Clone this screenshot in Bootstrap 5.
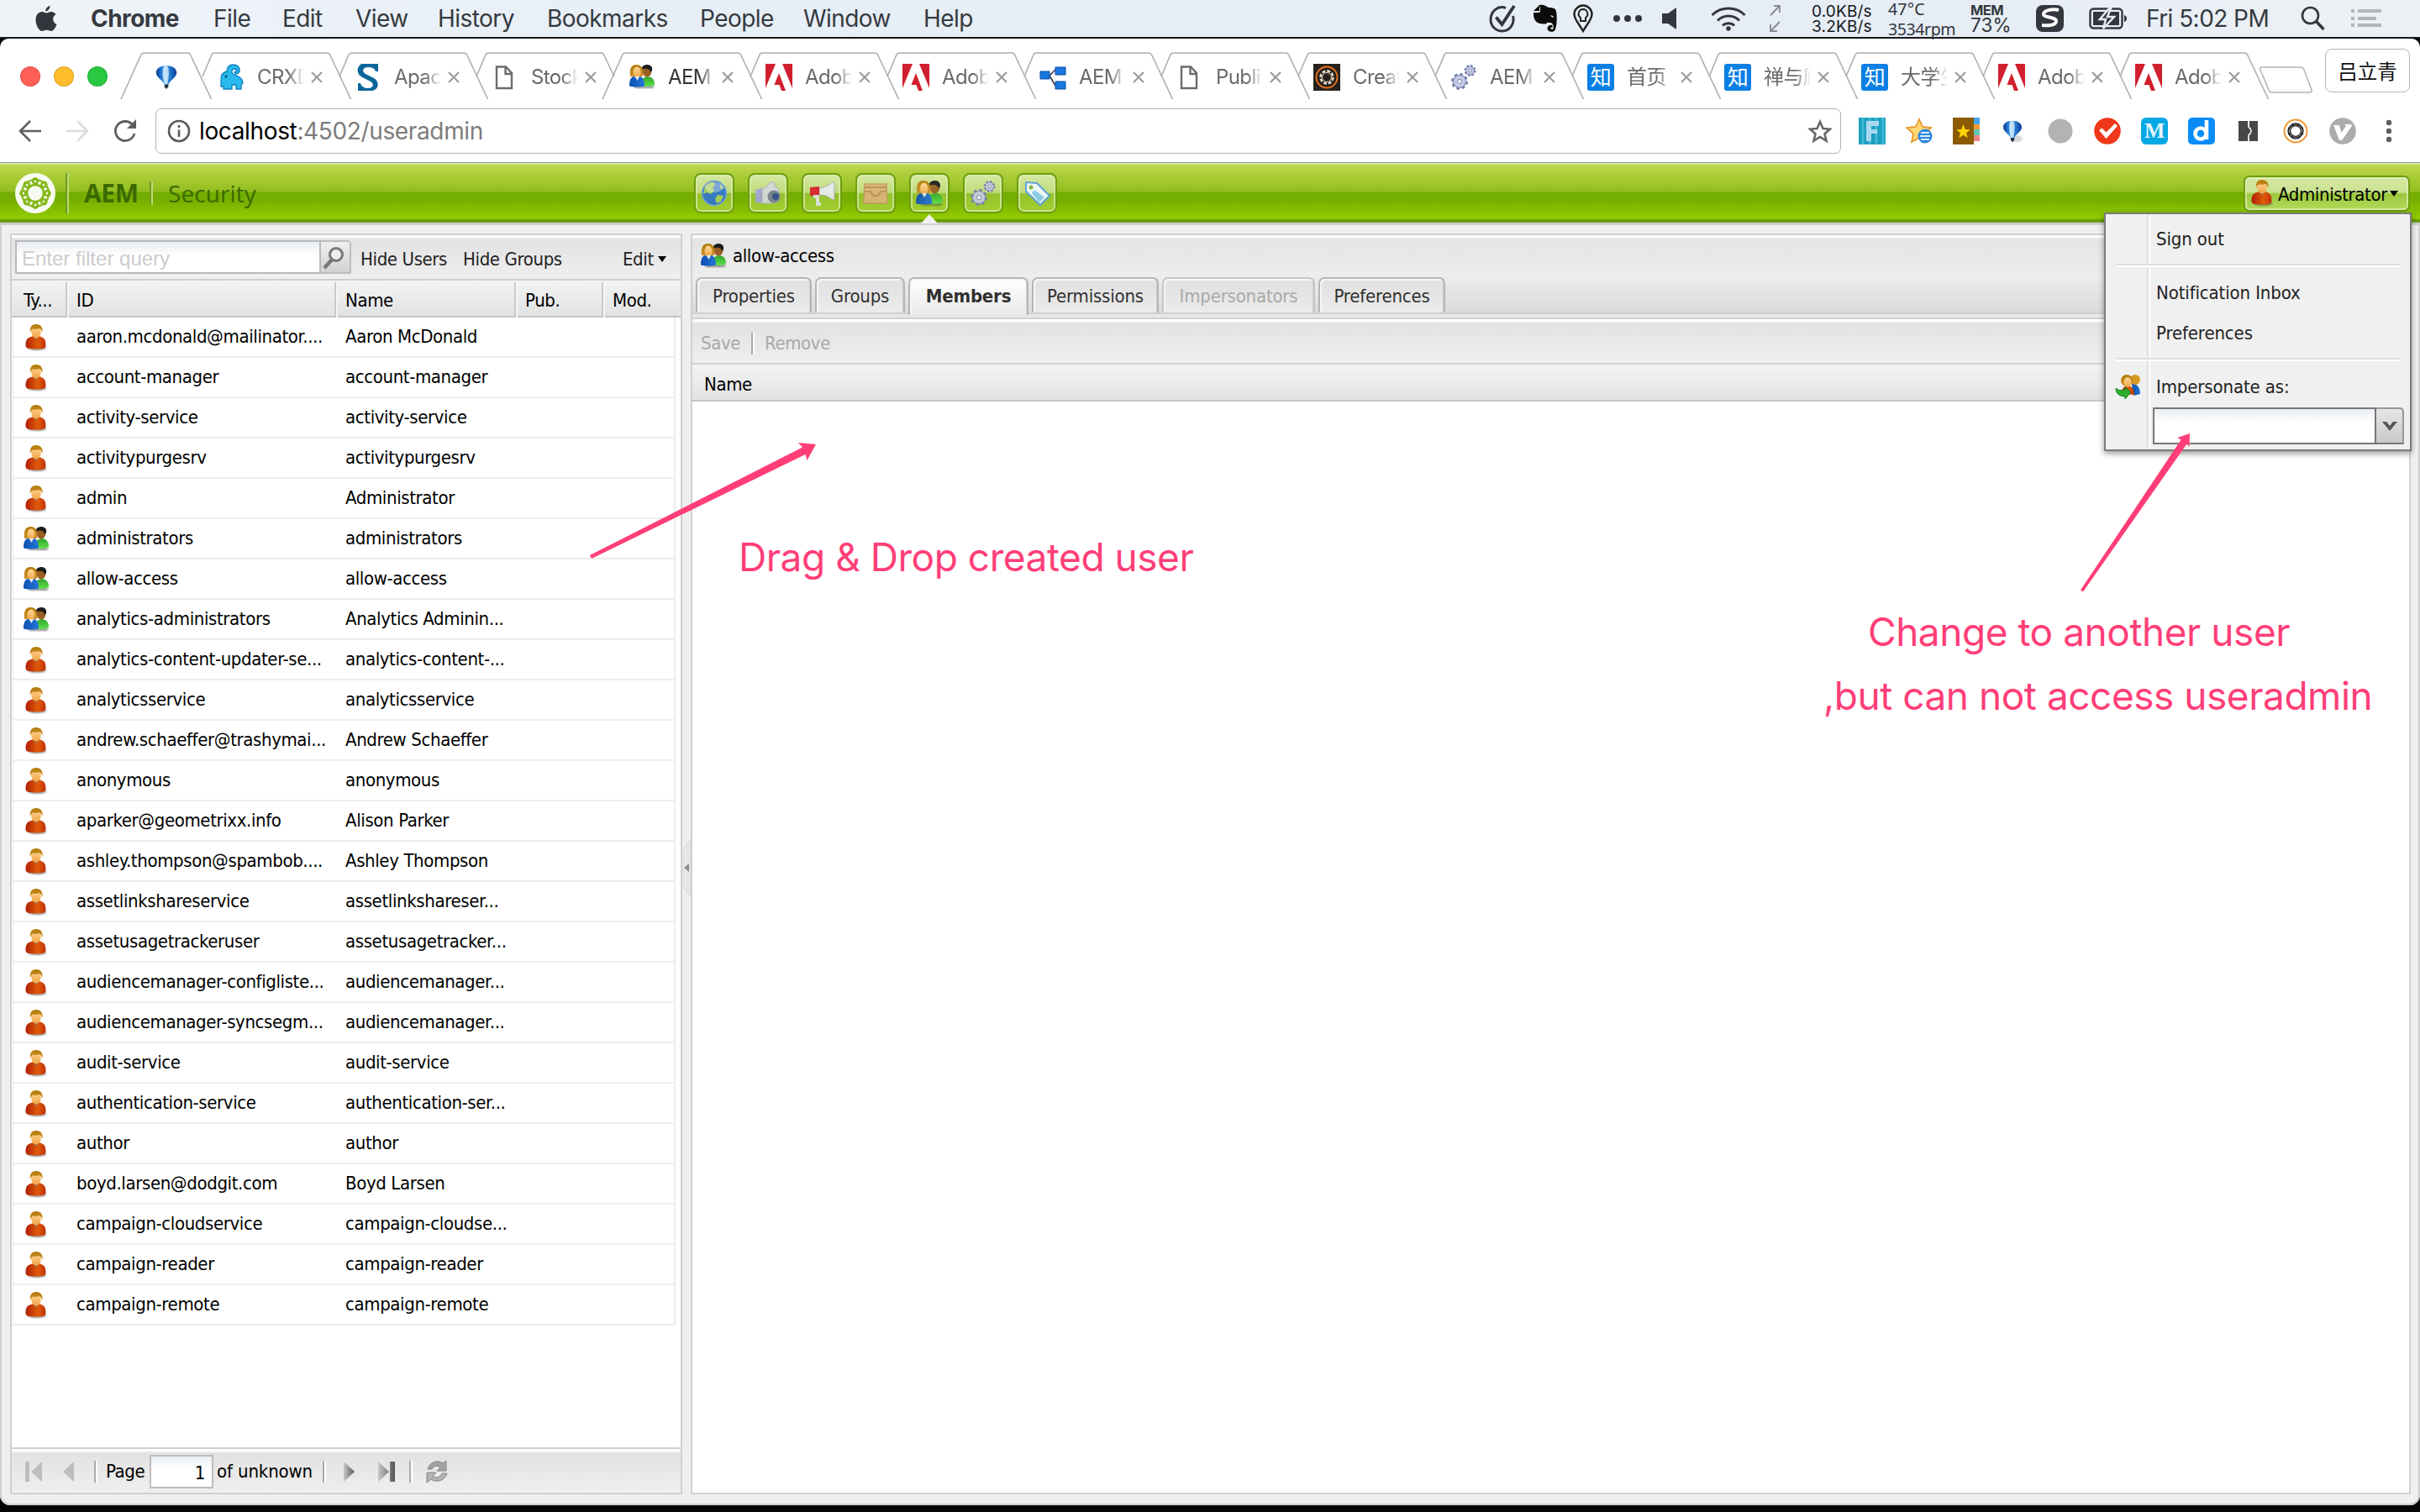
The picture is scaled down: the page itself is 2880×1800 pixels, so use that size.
<!DOCTYPE html>
<html lang="en">
<head>
<meta charset="utf-8">
<title>AEM Security</title>
<link href="https://cdn.jsdelivr.net/npm/bootstrap@5.3.0/dist/css/bootstrap.min.css" rel="stylesheet">
<style>
:root{--ui:"DejaVu Sans Condensed","DejaVu Sans",sans-serif;--mac:Inter,"Noto Sans CJK SC",sans-serif;--line:#d0d0d0}
body{width:2880px;height:1800px;overflow:hidden;background:#060606;font:22px/1 var(--ui);letter-spacing:-.38px;color:#000}
svg{display:block;flex:none}
/* system menu bar */
.menubar{display:grid;height:46px;grid-template-columns:67px 146px 82px 87px 98px 130px 182px 123px 143px 672px 52px 48px 48px 58px 58px 70px 51px 91px 98px 77px 63px 69px 183px 60px 1fr;padding-left:42px;background:linear-gradient(90deg,#eff4f8,#e6eef6 30%,#e6edf5 80%,#edf1f5);border-bottom:2px solid #14171e;font:28px/44px var(--mac);letter-spacing:-.55px;color:#353940;white-space:nowrap}
.menubar>span{margin-left:-1px}
.menubar>svg{align-self:center}
.twin svg{overflow:visible}
/* browser window */
.win{height:1746px;border-radius:10px 10px 12px 12px;overflow:hidden;background:#fff}
.strip{height:73px;font:24px/1 var(--mac);color:#6a6a6a;letter-spacing:-.6px}
.lights{width:157px;padding:33px 0 0 24px;gap:16px}
.lights i{width:24px;height:24px;border-radius:50%;box-shadow:inset 0 0 0 1px #0002}
.lights i:nth-child(1){background:#ff5f57}
.lights i:nth-child(2){background:#ffbd2e}
.lights i:nth-child(3){background:#28c940}
.ctab{position:relative;width:163px;height:73px;flex:none}
.ctab.pin{width:84px}
.ctab>.edge{position:absolute;left:0;top:17px;overflow:visible;fill:none;stroke:#adadad;stroke-width:1.6}
.ctab>.body{display:flex;align-items:center;padding-left:18px;height:92px}
.ctab.pin>.body{padding-left:26px}
.cap{width:56px;margin-left:15px;overflow:hidden;white-space:nowrap;line-height:34px;-webkit-mask:linear-gradient(90deg,#000 66%,#0000 100%);mask:linear-gradient(90deg,#000 66%,#0000 100%)}
.ctab.on .cap{color:#333}
.close{margin-left:7px}
.newtab{margin:33px 0 0 2px}
.profile{width:101px;height:52px;margin:12px 0 0 13px;border:1.5px solid #b3b3b3;border-radius:8px;font:23.5px/50px "Noto Sans CJK SC",sans-serif;text-align:center;color:#111;letter-spacing:0}
.nav-row{height:75px;padding:0 0 0 22px;border-bottom:1.5px solid #9b9b9b}
.nav-row .fwd{margin:0 28px}
.omni{width:2006px;height:54px;margin-left:21px;padding:0 9px 0 13px;border:1.5px solid #b3b3b3;border-radius:7px;font:28px/1 var(--mac);letter-spacing:-.36px}
.omni .url{margin-left:10px;color:#7c7c7c}
.ext{gap:24px;margin-left:21px}
/* application header */
.apphead{height:72px;background:linear-gradient(#d3e79b 0,#d3e79b 1px,#bed64d 3px,#a6ca33 18px,#93be1f 34px,#72ac00 35px,#75af00 44px,#93cb00 66px,#679b00 68px,#5d9000 70px,#b5c4a0 71px,#cfcfcf 72px);font-family:"Open Sans","Noto Sans",sans-serif;color:#3c6a00}
.applogo{margin-left:18px;margin-right:12px}
.vsep{width:2px;height:48px;background:#6f9f1c;box-shadow:2px 0 #bcd877}
.vsep.sm{height:28px}
.brand{font-size:30px;margin-left:20px;width:78px}
.area{font-size:28px;margin-left:20px;width:626px;letter-spacing:.1px}
.tool{width:48px;height:48px;border-radius:8px;border:2px solid #6f9d12;box-shadow:inset 0 0 0 2px #dcefaeb0;background:linear-gradient(#d6e8a2,#c0dc7c 48%,#93c02c 52%,#a3d02f);display:flex;align-items:center;justify-content:center}
.tool svg{opacity:.92}
.tools{gap:16px}
.sel{position:relative}
.sel:after{content:"";position:absolute;left:12px;top:47px;border:10px solid transparent;border-top:0;border-bottom:11px solid #f2f2f2}
.account{margin-right:12px}
.admin{width:198px;height:43px;border:2px solid #6f9d12;border-radius:7px;box-shadow:inset 0 0 0 2px #e3f2bdb0;background:linear-gradient(#d6e8a2,#cbe292 45%,#9cc83c 52%,#b2d95c);color:#000;font-family:var(--ui);padding-left:6px}
.admin>span:first-of-type{margin:4px 3px 0 3px}
.usermenu{position:absolute;top:44px;right:-2px;width:366px;height:284px;background:linear-gradient(90deg,#f0f0f0 49px,#dedede 49px,#dedede 51px,#fff 51px,#fff 53px,#f0f0f0 53px);border:2px solid #7b7b7b;box-shadow:0 3px 7px #0006;z-index:5;color:#222;font:22px/48px var(--ui);letter-spacing:-.13px;padding:6px 0 0 60px}
.usermenu hr{margin:5px 12px 7px -48px;border:0;height:4px;opacity:1;background:linear-gradient(#dedede 50%,#fff 50%)}
.usermenu .who{margin-left:-49px;margin-right:17px}
.combo{width:299px;height:44px;margin-left:-4px;margin-top:0}
.combo b{width:267px;border:2px solid #777;background:linear-gradient(#e9edf1,#fff 40%)}
.combo i{width:33px;border:2px solid #999;border-left:0;border-bottom-color:#777;border-radius:0 5px 0 0;background:linear-gradient(#e6e6e6,#c9c9c9)}
/* panels */
.appbody{height:1526px;border:2px solid #cfcfcf;border-radius:0 0 12px 12px;background:#efefef;padding:10px 9px 11px 10px}
.pane{border:2px solid var(--line);background:#fff}
.pane.side{width:800px}
.bar{height:52px;background:linear-gradient(#fff 0,#fff 2px,#e2e2e2 5px,#e6e6e6 20px,#efefef 100%);color:#222;white-space:nowrap}
.bar.up{padding-top:5px}
.bar.mute{color:#a9a9a9;padding-left:10px}
.find{width:364px;height:40px;margin-left:4px;margin-top:-5px;padding-left:6px;border:2px solid #b9b9b9;background:linear-gradient(#e9edf1,#fff 45%);font:24px/40px "Liberation Sans",sans-serif;color:#ccc;letter-spacing:0}
.go{width:36px;height:40px;margin-top:-5px;margin-right:11px;border:2px solid #bdbdbd;border-left:0;border-radius:0 5px 0 0;background:linear-gradient(#f0f0f0,#d2d2d2)}
.hide1{width:122px}.hide2{width:190px}
.caret{border:5.5px solid transparent;border-bottom:0;border-top:7px solid #000}
.bar .caret{margin-left:5px}
.gridhead,.gridrow{display:grid;grid-template-columns:66px 320px 214px 104px 1fr;white-space:nowrap}
.gridhead{height:46px;border-top:2px solid var(--line);border-bottom:2px solid #c6c6c6;background:linear-gradient(#f2f4f4,#e2e2e2)}
.gridhead>span{padding:2px 0 0 11px;line-height:40px;border-right:2px solid #cacaca;box-shadow:2px 0 #f6f6f6;margin-top:2px}
.gridhead>span:first-child{padding-left:14px}
.gridhead>span:last-child{border:0;box-shadow:none}
.gridrow{height:48px;width:789px;margin-left:1px;border:solid #ededed;border-width:0 2px 2px 1px;line-height:45px}
.gridrow>span{padding-left:9px}
.gridrow>span:first-child{padding:8px 0 0 11px}
.foot{border-top:2px solid var(--line)}
.pager{padding-top:1px;color:#000}
.pager .first{margin-left:15px;margin-right:-1px}
.pager .pg{margin-left:12px;width:52px}
.pager .of{margin-left:4px;width:126px;letter-spacing:-.13px}
.pager .next{margin-left:22px}
.pager .ref{margin-left:16px}
.psep{width:2px;height:26px;background:#aaa;box-shadow:2px 0 #fff}
.pageno{width:76px;height:40px;border:2px solid #bdbdbd;background:linear-gradient(#e9edf1,#fff 40%);line-height:40px;text-align:right;padding-right:8px}
.split{width:10px}
.ptitle{height:50px;padding-left:9px;line-height:48px}
.ptitle span{margin-left:7px}
.phead{height:92px;background:linear-gradient(#fff 0,#fff 2px,#e4e4e4 5px,#ededed 48px,#dadada 92px)}
.ptabs{gap:4px;padding-left:4px;height:42px}
.ptab{height:42px;line-height:41px;text-align:center;border:2px solid #b6b6b6;border-bottom:0;border-radius:7px 7px 0 0;background:linear-gradient(#e0e0e0,#ebebeb);box-shadow:inset 2px 2px #f6f6f6,inset -1px 0 #cfcfcf;color:#303030;letter-spacing:-.2px}
.ptab.on{height:45px;background:linear-gradient(#fff,#e9e9e9);font-weight:700}
.ptab.off{color:#a9a9a9;border-color:#c6c6c6}
.spacer{height:8px;background:#e8e8e8;border:solid var(--line);border-width:2px 0}
.save{width:60px}.mute .psep{margin-right:14px}
.note{position:absolute;font:46px/76px var(--mac);letter-spacing:-.47px;color:#ff3e78;white-space:nowrap}
.n1{left:879px;top:625px}.n2{left:2223px;top:714px}.n3{left:2170px;top:790px}
.marks{position:absolute;left:0;top:0;pointer-events:none;z-index:9}
.w1{width:138px}.w2{width:107px}.w3{width:143px}.w4{width:151px}.w5{width:182px}.w6{width:151px}
</style>
<script src="https://cdn.jsdelivr.net/npm/bootstrap@5.3.0/dist/js/bootstrap.bundle.min.js"></script>
</head>
<body>
<svg width="0" height="0" class="position-absolute">
<defs>
<linearGradient id="gRed" x1="0" x2="1"><stop offset="0" stop-color="#b01e04"/><stop offset=".6" stop-color="#e05c0a"/><stop offset="1" stop-color="#bf3008"/></linearGradient>
<linearGradient id="gHair" x2="0" y2="1"><stop stop-color="#b07a08"/><stop offset="1" stop-color="#d0902a"/></linearGradient>
<linearGradient id="gSkin" x2="0" y2="1"><stop stop-color="#ffd79a"/><stop offset="1" stop-color="#f0a545"/></linearGradient>
<linearGradient id="gBlue"><stop stop-color="#0c4fb0"/><stop offset="1" stop-color="#2476d8"/></linearGradient>
<linearGradient id="gGreen" x2="0" y2="1"><stop stop-color="#2fa52a"/><stop offset="1" stop-color="#5fe04f"/></linearGradient>
<linearGradient id="gBal"><stop stop-color="#063a94"/><stop offset=".3" stop-color="#2a84dd"/><stop offset=".45" stop-color="#b5dffa"/><stop offset=".6" stop-color="#2f86dc"/><stop offset="1" stop-color="#063a94"/></linearGradient>
<linearGradient id="gGray"><stop stop-color="#c9c9c9"/><stop offset="1" stop-color="#555"/></linearGradient>
<filter id="soft" x="-20%" y="-20%" width="140%" height="140%"><feGaussianBlur stdDeviation="1.1"/></filter>
<symbol id="user" viewBox="0 0 32 32"><ellipse cx="17" cy="28" rx="11" ry="3" fill="#444" opacity=".6" filter="url(#soft)"/><path d="M3.500 25c0-6 2-8.500 5-9.500l4-1.500 3.500 3 4-3 3 1.500c3 1 4.500 4 4.500 9.500 0 4-4 4.500-12 4.500S3.500 29 3.500 25z" fill="url(#gRed)"/><path d="M12 13.500h8l-4 5z" fill="#83808a"/><ellipse cx="16" cy="9" rx="5.800" ry="7.500" fill="url(#gSkin)"/><path d="M9 10C8 4 10.500 0 16 0s8.500 4 7.500 10c-1-3-2.500-4.500-4-5-2 1-5 1-7 .5-2 1-3 2.500-3.500 4.500z" fill="url(#gHair)"/></symbol>
<symbol id="group" viewBox="0 0 32 32"><path d="M6 26h25l-2 3H8z" fill="#444" opacity=".6" filter="url(#soft)"/><path d="M15 26c0-7 2-10 7-11 6 0 9 4 9 9 0 3-8 4-16 2z" fill="url(#gGreen)"/><ellipse cx="22" cy="9" rx="5.500" ry="6.500" fill="#9a5f22"/><path d="M15.500 7c0-4 3-6 7-6s6.500 3 5.500 7l-2 2c0-4-5-5-8-4z" fill="#1c1c1c"/><path d="M2 15C1 6 3 1 9.500 1S18 6 17 15z" fill="url(#gHair)"/><ellipse cx="10" cy="10" rx="4.500" ry="6.500" fill="url(#gSkin)"/><path d="M1 26c0-7 2-11 6-11l3 3 3-3c4 0 6 5 6 11 0 2-18 2-18 0z" fill="url(#gBlue)"/><path d="M8 15h5l-2.500 5z" fill="#eee"/></symbol>
<symbol id="imp" viewBox="0 0 32 32"><path d="M20 12c7 0 10 5 10 12l-8 2z" fill="url(#gBlue)"/><path d="M8 24c0-6 2-9 7-10 6 1 8 5 8 11z" fill="url(#gRed)"/><circle cx="24" cy="7" r="6" fill="#d89a25"/><circle cx="14" cy="8" r="7" fill="url(#gHair)"/><ellipse cx="15" cy="10" rx="4.500" ry="6" fill="url(#gSkin)"/><path d="M1 17c3 3 6 3 11 2v-3l7 6-7 8v-3C6 27 1 24 1 17z" fill="#2eae2a" stroke="#14801a"/></symbol>
<symbol id="gear" viewBox="0 0 32 32"><g fill="#c5cbe6" stroke="#7680ae"><circle cx="11" cy="21" r="8" stroke-width="4" stroke-dasharray="3.300 3"/><circle cx="11" cy="21" r="7.500"/><circle cx="11" cy="21" r="2.500" fill="#fff"/><circle cx="23.500" cy="8" r="5.500" stroke-width="3" stroke-dasharray="2.300 2"/><circle cx="23.500" cy="8" r="5"/><circle cx="23.500" cy="8" r="1.800" fill="#fff"/></g></symbol>
<symbol id="balloon" viewBox="0 0 28 32"><path d="M14 1c8 0 13 4 13 9 0 6-8 9-11 16h-4C9 19 1 16 1 10c0-5 5-9 13-9z" fill="url(#gBal)"/><path d="M11 2h5c2 6 1 15-1 23h-2C9 17 8 8 11 2z" fill="#cfe9fb" opacity=".8"/><path d="M11.500 25h5v3l-2.500 3-2.500-3z" fill="#253447"/></symbol>
<symbol id="adobe" viewBox="0 0 32 32"><path fill="#d01f2e" d="M0 0h12L0 29zM20 0h12v29zM16 11l8 21h-5l-2.500-7h-6z"/></symbol>
<symbol id="doc" viewBox="0 0 32 32"><path d="M6 3.500h11l7 7.500v18H6zM16.500 4v8H24" fill="none" stroke="#6b6b6b" stroke-width="2.400"/></symbol>
<symbol id="crx" viewBox="0 0 32 32"><path d="M4 27v-9c0-5 3-8 7-9C11 4 14 1 19 1c5 0 8 4 7 8-1 3-5 4-6 1 3 0 3-4 0-4-3 0-4 3-2 6l5 2c4 2 7 5 7 9l-2 2v5h-6v-5h-5v5H7v-3z" fill="#29b9ec" stroke="#0c80bd" stroke-width="1.300"/><circle cx="10" cy="15" r="1.500" fill="#06456b"/></symbol>
<symbol id="sling" viewBox="0 0 32 32"><path d="M4 0h24v9h-3C24 5 20 4 16 4c-6 0-8 5-3 8l10 5c8 5 5 15-3 15H4v-9h3c1 4 5 6 9 6 6 0 8-5 3-8L9 16C2 12 2 4 8 0z" fill="#0a6699"/></symbol>
<symbol id="flow" viewBox="0 0 32 32"><path d="M12 14l7-7M12 14l7 12" stroke="#334" stroke-width="1.500"/><g fill="#1877e0" stroke="#0c4da3"><path d="M1 9h11v9H1zM19 4h12v9H19zM19 21h12v9H19z"/></g></symbol>
<symbol id="create" viewBox="0 0 32 32"><path fill="#26211c" d="M0 0h32v32H0z"/><circle cx="16" cy="16" r="12.500" fill="none" stroke="#f0741c" stroke-width="1.800"/><g fill="none" stroke="#eadccb" stroke-width="1.600"><circle cx="16" cy="16" r="7.500" stroke-width="2.500" stroke-dasharray="4 1.890"/><circle cx="16" cy="16" r="5.500" stroke-width="1"/></g></symbol>
<symbol id="zhi" viewBox="0 0 32 32"><rect width="32" height="32" rx="3" fill="#0b7fe4"/><text x="16" y="25" text-anchor="middle" font-family="Noto Sans CJK SC" font-size="25" fill="#fff">知</text></symbol>
<symbol id="x" viewBox="0 0 16 16"><path d="M2 2l12 12M14 2L2 14" stroke="#999" stroke-width="2"/></symbol>
</defs>
</svg>

<nav class="menubar">
<svg width="26" height="32" viewBox="0 0 26 32"><path fill="#33373d" d="M17.500 1c.3 3-2.500 6.500-5.300 6.300C12 4.500 14.500 1.500 17.500 1zM13 9.500c2 0 3-1.500 6-1.500 2.500 0 4.500 1.500 5.500 3-5 3-4 10 1 12-1.500 4-4 8-6.500 8-2 0-3-1.200-5.500-1.200S10 31 8 31c-3.500 0-7.500-7-7.500-13C.5 11.500 4 8 8 8c2 0 3.500 1.500 5 1.500z"/></svg>
<span class="fw-bold">Chrome</span><span>File</span><span>Edit</span><span>View</span><span>History</span><span>Bookmarks</span><span>People</span><span>Window</span><span>Help</span>
<svg width="32" height="34" viewBox="0 0 32 34" fill="none" stroke="#33373d" stroke-width="3"><path d="M20 4.500C10 1 2 9 2 18c0 8 6 14 13.500 14C25 32 31 23 28.500 14"/><path d="M8.500 15.500l7 8.500L30 2" stroke-width="3.800"/></svg>
<svg width="30" height="34" viewBox="0 0 30 34"><path fill="#0b0b0b" d="M8 2v6H1l7-7c6-1 8 2 11 3 8 0 9 2 9.500 8 .5 9 0 14-2 19-2 3-9 2-9-2 0-3 3-5 6-4v3c-3-1-3 2 0 2 2 0 2-7-2-8-3 0-4-1-5 1-2 1-10 1-13-3C1 17 1 13 1 10h7c1-1 2-4 0-8z"/><path d="M21 14c2-1 4 0 4 2z" fill="#fff"/></svg>
<svg width="24" height="34" viewBox="0 0 24 34" fill="none" stroke="#222" stroke-width="2.400"><path d="M12 32C7 23 1.500 18 1.500 12a10.500 10.500 0 0 1 21 0C22.500 18 17 23 12 32z"/><path d="M12 6a5.500 5.500 0 0 1 3 10v4H9v-4a5.500 5.500 0 0 1 3-10z" stroke-width="2"/></svg>
<svg width="34" height="8" viewBox="0 0 34 8" fill="#33373d"><circle cx="4" cy="4" r="4"/><circle cx="17" cy="4" r="4"/><circle cx="30" cy="4" r="4"/></svg>
<svg width="18" height="26" viewBox="0 0 18 26"><path fill="#33373d" d="M0 7h7l10-7v26L7 19H0z"/></svg>
<svg width="42" height="30" viewBox="0 0 42 30" fill="none" stroke="#33373d" stroke-width="3"><path d="M1.500 11a28 28 0 0 1 39 0M8 17.500a18 18 0 0 1 26 0M14 23.500a10 10 0 0 1 14 0"/><circle cx="21" cy="27" r="2" fill="#33373d" stroke-width="1.500"/></svg>
<svg width="13" height="32" viewBox="0 0 13 32" fill="none" stroke="#888b90" stroke-width="1.800"><path d="M1 12L12 1M5 1h7v8M12 20L1 31M1 23v8h8"/></svg>
<span class="twin"><svg width="90" height="44"><g font-family="Inter" font-size="19" fill="#15171a"><text x="0" y="20" textLength="71">0.0KB/s</text><text x="0" y="38" textLength="71">3.2KB/s</text></g></svg></span>
<span class="twin"><svg width="90" height="44"><g font-family="Noto Sans" font-size="19.500" fill="#33373d"><text x="0" y="18" textLength="43">47°C</text><text x="0" y="42" textLength="80">3534rpm</text></g></svg></span>
<span class="twin"><svg width="60" height="44"><g font-family="Inter" fill="#33373d"><text x="0" y="18" font-size="16.500" font-weight="700" textLength="39">MEM</text><text x="0" y="38" font-size="22.500" textLength="48">73%</text></g></svg></span>
<svg width="33" height="32" viewBox="0 0 33 32"><rect width="33" height="32" rx="8" fill="#33373d"/><path d="M27 6c-7-2-18 0-18 5 0 4 15 3 15 8 0 5-9 6-17 5" fill="none" stroke="#fff" stroke-width="4"/></svg>
<svg width="46" height="26" viewBox="0 0 46 26"><rect x="1.500" y="1.500" width="38" height="23" rx="4" fill="none" stroke="#33373d" stroke-width="2.400"/><path d="M5 5h31v16H5z" fill="#33373d"/><path d="M42 9v8c4-1 4-7 0-8z" fill="#33373d"/><path d="M24 1L13 14h7l-3 11 13-14h-8l4-10z" fill="#33373d" stroke="#e7edf4" stroke-width="2.500"/></svg>
<span>Fri 5:02 PM</span>
<svg width="30" height="30" viewBox="0 0 30 30" fill="none" stroke="#33373d" stroke-width="2.600"><circle cx="11.500" cy="11.500" r="9.500"/><path d="M18 18l9.500 10" stroke-width="3.400"/></svg>
<svg width="36" height="22" viewBox="0 0 36 22" fill="#b2b5b8"><path d="M0 0h4v4H0zM8 0h28v4H8zM0 9h4v4H0zM8 9h22v4H8zM0 17h4v4H0zM8 17h28v4H8z"/></svg>
</nav>

<div class="win">
<div class="strip d-flex align-items-start">
<div class="lights d-flex"><i></i><i></i><i></i></div>
<div class="d-flex" id="tabs"></div>
<svg class="newtab" width="66" height="33" viewBox="0 0 66 33"><path d="M3 1h47q3 0 4 3l9 24q1 3-2 3H16q-3 0-4-3L2 4Q1 1 3 1z" fill="#fff" stroke="#b5b5b5" stroke-width="1.600"/></svg>
<div class="profile">吕立青</div>
</div>
<div class="nav-row d-flex align-items-center">
<svg width="28" height="28" viewBox="0 0 28 28" fill="none" stroke="#5f5f5f" stroke-width="2.600"><path d="M14 2L2 14l12 12M2 14h25"/></svg>
<svg class="fwd" width="28" height="28" viewBox="0 0 28 28" fill="none" stroke="#dcdcdc" stroke-width="2.600"><path d="M14 2l12 12-12 12M26 14H1"/></svg>
<svg width="30" height="30" viewBox="0 0 30 30"><path d="M24 8A11.500 11.500 0 1 0 26 18" fill="none" stroke="#5f5f5f" stroke-width="2.800"/><path d="M28 1v11H17z" fill="#5f5f5f"/></svg>
<div class="omni d-flex align-items-center">
<svg width="28" height="28" viewBox="0 0 28 28" fill="none" stroke="#5a5a5a" stroke-width="2.600"><circle cx="14" cy="14" r="12"/><path d="M14 12.500V21M14 7v3"/></svg>
<span class="url"><span class="text-black">localhost</span>:4502/useradmin</span>
<svg class="ms-auto" width="30" height="28" viewBox="0 0 30 28"><path d="M15 3l3.500 8 8.500.7-6.500 5.600 2 8.400L15 21l-7.500 4.700 2-8.400L3 11.700l8.500-.7z" fill="none" stroke="#666" stroke-width="2.600"/></svg>
</div>
<div class="ext d-flex align-items-center">
<svg width="32" height="32" viewBox="0 0 32 32"><path fill="#1c9fc0" d="M0 0h32v32H0z"/><path d="M5 0v32M13 0v32M21 0v32M29 0v32" stroke="#41b8d4" stroke-width="3"/><path d="M9 4h15v6H15v4h7v5h-7v9H9z" fill="#a8d8f0"/></svg>
<svg width="32" height="32" viewBox="0 0 32 32"><path d="M16 2l4 9 10 1-7 7 2 10-9-5-9 5 2-10-8-7 11-1z" fill="#ffd978" stroke="#e6992e" stroke-width="1.800"/><circle cx="23" cy="22" r="8.500" fill="#2f86dc"/><path d="M18 18h10M17 22h12M18 26h10" stroke="#d9ecff" stroke-width="2"/></svg>
<svg width="32" height="32" viewBox="0 0 32 32"><path fill="#8c5a00" d="M0 0h25v32H0z"/><path fill="#45a3f0" d="M25 0h7v8h-7z"/><path fill="#f09a35" d="M25 8h7v6h-7z"/><path fill="#63c7b8" d="M25 14h7v7h-7z"/><path fill="#ee8389" d="M25 21h7v7h-7z"/><path d="M12.500 8l2.300 6 6 .3-4.700 4 1.600 6-5.200-3.500-5.200 3.500 1.600-6-4.700-4 6-.3z" fill="#ffd400"/></svg>
<svg width="32" height="32"><ellipse cx="20" cy="25" rx="7" ry="4" fill="#bbb" opacity=".6" filter="url(#soft)"/><use href="#balloon" x="3" y="3" width="24" height="27"/></svg>
<svg width="32" height="32"><circle cx="16" cy="16" r="14.500" fill="#b3b3b3"/></svg>
<svg width="32" height="32"><circle cx="16" cy="16" r="15.800" fill="#ef3819"/><path d="M6 15l3.500-2.500 5 5L25 7l3 3-13.500 15z" fill="#fff"/></svg>
<svg width="32" height="32"><rect width="32" height="32" rx="6" fill="#04a9e4"/><text x="16" y="24" text-anchor="middle" font-family="Liberation Serif" font-weight="700" font-size="25" fill="#e9f6fc" textLength="24" lengthAdjust="spacingAndGlyphs">M</text></svg>
<svg width="32" height="32"><rect width="32" height="32" rx="5" fill="#0a8cf8"/><g fill="none" stroke="#fff" stroke-width="4.500"><circle cx="15" cy="19" r="6.500"/><path d="M22 3v23"/></g></svg>
<svg width="32" height="32"><path d="M4 4h11v6h2V4h10v24H17v-3h-2v3H4z" fill="#454748"/><path d="M16 4v7q6 5 0 10v7" fill="none" stroke="#e8e8e8" stroke-width="1.800"/></svg>
<svg width="32" height="32" fill="none"><circle cx="16" cy="16" r="13.500" stroke="#f29a38" stroke-width="2"/><g stroke="#222" stroke-width="1.400"><circle cx="16" cy="16" r="6.500"/><path d="M16 7l6 3 3 6-3 6-6 3-6-3-3-6 3-6z"/><path d="M12.500 7.500h7l5 5v7l-5 5h-7l-5-5v-7z"/></g></svg>
<svg width="32" height="32"><circle cx="16" cy="16" r="15.800" fill="#acacac"/><path d="M5 9h7l2.500 9L20 10l-2-2h8l1 2-12 17h-3z" fill="#fff"/></svg>
<svg width="32" height="32" fill="#5f5f5f"><circle cx="15" cy="6" r="3.200"/><circle cx="15" cy="16" r="3.200"/><circle cx="15" cy="26" r="3.200"/></svg>
</div>
</div>

<header class="apphead d-flex align-items-center">
<svg class="applogo" width="48" height="48" viewBox="0 0 48 48"><circle cx="24" cy="24" r="24" fill="#f8fbf0"/><g fill="none" stroke="#84b818" stroke-width="2.600"><circle cx="24" cy="24" r="10"/><g id="lk"><circle cx="24" cy="9.500" r="3"/><circle cx="24" cy="38.500" r="3"/><circle cx="9.500" cy="24" r="3"/><circle cx="38.500" cy="24" r="3"/></g><use href="#lk" transform="rotate(45 24 24)"/><circle cx="24" cy="24" r="16" stroke-width="2.200"/></g></svg>
<span class="vsep"></span>
<span class="brand fw-bold">AEM</span>
<span class="vsep sm"></span>
<span class="area">Security</span>
<div class="tools d-flex">
<span class="tool"><svg width="32" height="32" viewBox="0 0 32 32"><circle cx="16" cy="16" r="14.500" fill="#2f74cc" stroke="#7aa5dc" stroke-width="1.500"/><path d="M5 8c4-5 9-6 11-5l1 3-3 4 2 3-4 4-5-2-4 2zM20 18l7 1-3 7-5 2-2-5zM23 5l5 6-5-1z" fill="#a4cd5a"/><ellipse cx="16" cy="9" rx="11" ry="6" fill="#fff" opacity=".35"/></svg></span>
<span class="tool"><svg width="32" height="32" viewBox="0 0 32 32"><path d="M1 12l8-2v18l-8-1z" fill="#a3a6d8"/><path d="M9 10l5-1 4-6h5l2 5 4 4v13l-6 3H9z" fill="#d6d9de" stroke="#a9acb8"/><circle cx="23" cy="20" r="7.500" fill="#777f94"/><circle cx="25" cy="20" r="4" fill="#304b90"/></svg></span>
<span class="tool"><svg width="32" height="32" viewBox="0 0 32 32"><path d="M13 10c8-1 12-4 16-7l2 1v19l-2 1c-4-3-8-6-16-6z" fill="#e9ecef" stroke="#aab"/><path d="M2 9l11-1v12L2 19z" fill="#d81f2c"/><path d="M6 20h5v9h4" fill="none" stroke="#dfe2e4" stroke-width="4"/></svg></span>
<span class="tool"><svg width="32" height="32" viewBox="0 0 32 32"><path d="M3 5h26l1 23H2z" fill="#ddb27a" stroke="#c89a60" stroke-width="1.500"/><path d="M3 9h26M3 14h7l3 5h6l3-5h7" stroke="#bd8f58" stroke-width="2" fill="none"/></svg></span>
<span class="tool sel"><svg width="34" height="34"><use href="#group" width="34" height="34" y="1"/></svg></span>
<span class="tool"><svg width="32" height="32"><use href="#gear" width="32" height="32"/></svg></span>
<span class="tool"><svg width="32" height="32" viewBox="0 0 32 32"><path d="M3 3l13 1 15 15-11 11L3 14z" fill="#f2f8ff" stroke="#5c9fe0" stroke-width="2"/><path d="M13 12l12 9-6 6-9-11z" fill="#88ccf4"/><circle cx="9" cy="9" r="2.500" fill="#7db344"/></svg></span>
</div>
<div class="account dropdown position-relative ms-auto">
<div class="admin d-flex align-items-center"><svg width="30" height="32"><use href="#user" x="-2" width="32" height="32"/></svg><span>Administrator</span><span class="caret"></span></div>
<div class="usermenu"><div>Sign out</div><hr><div>Notification Inbox</div><div>Preferences</div><hr>
<div class="d-flex align-items-center"><svg class="who" width="32" height="32"><use href="#imp" width="32" height="32"/></svg>Impersonate as:</div>
<div class="combo d-flex"><b></b><i class="d-flex align-items-center justify-content-center"><svg width="18" height="14" viewBox="0 0 18 14"><path d="M0 2h5l4 5 4-5h5L9 13z" fill="#555"/></svg></i></div></div>
</div>
</header>

<main class="appbody d-flex">
<section class="pane side d-flex flex-column">
<div class="bar up d-flex align-items-center">
<div class="find">Enter filter query</div><div class="go"><svg width="34" height="36" viewBox="0 0 34 36"><circle cx="18" cy="15" r="7.500" fill="#eee" stroke="#777" stroke-width="3"/><path d="M13 21l-9 10" stroke="#777" stroke-width="4.500"/></svg></div>
<span class="hide1">Hide Users</span><span class="hide2">Hide Groups</span><span>Edit</span><span class="caret"></span>
</div>
<div class="gridhead"><span>Ty...</span><span>ID</span><span>Name</span><span>Pub.</span><span>Mod.</span></div>
<div class="flex-grow-1" id="rows"></div>
<div class="foot"></div>
<div class="bar pager d-flex align-items-center">
<svg class="first" width="46" height="26" viewBox="0 0 46 26"><path d="M1 1h5v24H1zM21 1v24L8 13z" fill="#bdbdbd"/></svg>
<svg width="38" height="26" viewBox="0 0 38 26"><path d="M14 1v24L1 13z" fill="#bdbdbd"/></svg>
<span class="psep"></span><span class="pg">Page</span><span class="pageno">1</span><span class="of">of unknown</span><span class="psep"></span>
<svg class="next" width="41" height="26" viewBox="0 0 41 26"><path d="M1 1v24l13-12z" fill="url(#gGray)"/></svg>
<svg width="38" height="26" viewBox="0 0 38 26"><path d="M1 1v24l13-12zM15 1h6v24h-6z" fill="url(#gGray)"/></svg>
<span class="psep"></span>
<svg class="ref" width="30" height="30" viewBox="0 0 30 30"><path d="M4 12C6 4 15 0 22 5l4-3v12H15l4-4c-4-3-8-2-10 2z" fill="#a3a3a3" stroke="#858585"/><path d="M27 17c-2 8-12 12-19 7l-5 4V16h11l-4 4c4 3 9 2 11-3z" fill="#b3b3b3" stroke="#858585"/></svg>
</div>
</section>
<div class="split d-flex align-items-center"><svg class="mt-2" width="10" height="70" viewBox="0 0 10 70"><path d="M10 1L1 12v46l9 11z" fill="#e6e6e6" stroke="#dadada"/><path d="M8 30v10l-6-5z" fill="#8d8d8d"/></svg></div>
<section class="pane flex-grow-1">
<div class="phead"><div class="ptitle d-flex align-items-center"><svg width="32" height="32"><use href="#group" width="32" height="32"/></svg><span>allow-access</span></div>
<div class="ptabs d-flex"><div class="ptab w1">Properties</div><div class="ptab w2">Groups</div><div class="ptab on w3">Members</div><div class="ptab w4">Permissions</div><div class="ptab off w5">Impersonators</div><div class="ptab w6">Preferences</div></div></div>
<div class="spacer"></div>
<div class="bar up mute d-flex align-items-center"><span class="save">Save</span><span class="psep"></span><span>Remove</span></div>
<div class="gridhead d-block"><span class="d-block">Name</span></div>
</section>
</main>
</div>

<svg class="marks" width="2880" height="1800" fill="#ff3e78"><path d="M702 661l2 4 254.500-124 2 7 10.500-19-21-2 5 5.500zM2476 702.500l3 2L2602.500 528.500l3 3.500.5-16-14.500 5 4 2.500z"/></svg>
<div class="note n1">Drag &amp; Drop created user</div>
<div class="note n2">Change to another user</div>
<div class="note n3">,but can not access useradmin</div>

<script>
const tabs = [["crx","CRXD"],["sling","Apach"],["doc","Stock"],["group","AEM"],["adobe","Adob"],["adobe","Adob"],["flow","AEM"],["doc","Publi"],["create","Creat"],["gear","AEM"],["zhi","首页"],["zhi","禅与廊"],["zhi","大学生"],["adobe","Adob"],["adobe","Adob"]];
const edge = (tr, left, right) => `<svg class="edge" width="10" height="56"><path d="M${left?-13:0} ${left?55:28}L11 2q1-2 3.500-2H${tr-3}q2.500 0 3.500 2L${right?tr+25.500:tr+13} ${right?55:28}"/></svg>`;
let h = `<div class="ctab pin">${edge(69,true,true)}<div class="body"><svg width="32" height="32"><use href="#balloon" x="1" y="1" width="28" height="30"/></svg></div></div>`;
tabs.forEach(([icon, text], i) => {
  h += `<div class="ctab ${i==3?'on':''}">${edge(151, i==3, i!=2)}<div class="body"><svg width="32" height="32"><use href="#${icon}" width="32" height="32"/></svg><span class="cap">${text}</span><svg class="close" width="16" height="16"><use href="#x" width="16" height="16"/></svg></div></div>`;
});
document.getElementById('tabs').innerHTML = h;

const users = `aaron.mcdonald@mailinator....|Aaron McDonald
account-manager|account-manager
activity-service|activity-service
activitypurgesrv|activitypurgesrv
admin|Administrator
*administrators|administrators
*allow-access|allow-access
*analytics-administrators|Analytics Adminin...
analytics-content-updater-se...|analytics-content-...
analyticsservice|analyticsservice
andrew.schaeffer@trashymai...|Andrew Schaeffer
anonymous|anonymous
aparker@geometrixx.info|Alison Parker
ashley.thompson@spambob....|Ashley Thompson
assetlinkshareservice|assetlinkshareser...
assetusagetrackeruser|assetusagetracker...
audiencemanager-configliste...|audiencemanager...
audiencemanager-syncsegm...|audiencemanager...
audit-service|audit-service
authentication-service|authentication-ser...
author|author
boyd.larsen@dodgit.com|Boyd Larsen
campaign-cloudservice|campaign-cloudse...
campaign-reader|campaign-reader
campaign-remote|campaign-remote`.split('\n');
document.getElementById('rows').innerHTML = users.map(u => {
  const g = u[0] == '*', [id, name] = u.replace('*','').split('|');
  return `<div class="gridrow"><span><svg width="32" height="32"><use href="#${g?'group':'user'}" width="32" height="32"/></svg></span><span>${id}</span><span>${name}</span></div>`;
}).join('');
</script>
</body>
</html>
